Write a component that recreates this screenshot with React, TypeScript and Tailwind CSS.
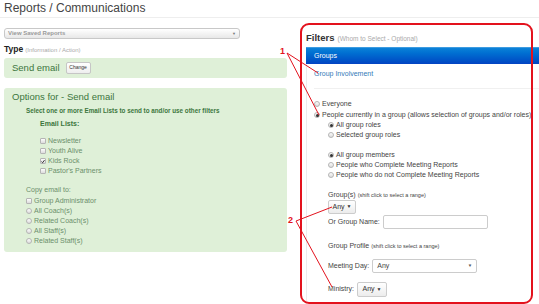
import React from "react";

function Radio({ checked = false }: { checked?: boolean }) {
  return (
    <span className="inline-flex w-[6px] h-[6px] rounded-full border border-[#b5b5b5] bg-gradient-to-b from-[#fdfdfd] to-[#dcdcdc] items-center justify-center mr-[2px] shrink-0">
      {checked && <span className="w-[3px] h-[3px] rounded-full bg-[#333]" />}
    </span>
  );
}

function Check({ checked = false }: { checked?: boolean }) {
  return (
    <span className="inline-flex w-[6px] h-[6px] rounded-[1px] border border-[#b5b5b5] bg-gradient-to-b from-[#fdfdfd] to-[#dcdcdc] items-center justify-center mr-[2px] shrink-0">
      {checked && (
        <svg width="5" height="5" viewBox="0 0 5 5">
          <path d="M0.6 2.6 L2 4 L4.4 0.8" stroke="#222" strokeWidth="1.1" fill="none" />
        </svg>
      )}
    </span>
  );
}

function Row({ children, className = "" }: { children: React.ReactNode; className?: string }) {
  return <div className={"flex items-center h-[10px] leading-[10px] " + className}>{children}</div>;
}

function SmallBtn({ label, w }: { label: string; w: string }) {
  return (
    <span className={"inline-flex items-center justify-center h-full rounded-[2px] border border-[#ccc] bg-gradient-to-b from-white to-[#ececec] text-[7px] text-[#333] " + w}>
      {label}
      <span className="ml-[2px] text-[5px]">▼</span>
    </span>
  );
}

export default function App() {
  const lists = [
    { name: "Newsletter", on: false },
    { name: "Youth Alive", on: false },
    { name: "Kids Rock", on: true },
    { name: "Pastor's Partners", on: false },
  ];
  const copyTo = ["All Coach(s)", "Related Coach(s)", "All Staff(s)", "Related Staff(s)"];

  return (
    <div className="relative w-[539px] h-[304px] overflow-hidden bg-white font-['Liberation_Sans',Arial,sans-serif] text-[#333]">
      <div className="h-[18px] border-b border-[#eee] px-[4px] text-[12px] leading-[17px] text-[#444]">
        Reports / Communications
      </div>

      <div className="flex">
        {/* left column */}
        <div className="w-[283px] ml-[4px]">
          <div className="mt-[10px] w-[236px] h-[11px] rounded-[3px] border border-[#c8c8c8] bg-gradient-to-b from-white to-[#e8e8e8] flex items-center justify-between px-[3px]">
            <span className="text-[6px] font-bold text-[#9a9a9a]">View Saved Reports</span>
            <span className="text-[4px] text-[#777]">▼</span>
          </div>

          <div className="mt-[5px] h-[10px] leading-[10px] flex items-baseline">
            <span className="text-[8.5px] font-bold text-[#222]">Type</span>
            <span className="ml-[2px] text-[6px] text-[#aaa]">(Information / Action)</span>
          </div>

          <div className="mt-[4px] h-[20px] rounded-[3px] bg-[#dff0d8] flex items-center pl-[8px]">
            <span className="text-[9.5px] text-[#3c763d] font-medium">Send email</span>
            <span className="ml-[6px] h-[12px] w-[25px] rounded-[2px] border border-[#c6c6c6] bg-gradient-to-b from-white to-[#eee] text-[5px] text-[#333] flex items-center justify-center">
              Change
            </span>
          </div>

          <div className="mt-[10px] rounded-[3px] bg-[#dff0d8] pt-[2px] pb-[6px] text-[#3c763d]">
            <div className="h-[14px] leading-[14px] pl-[8px] text-[9.5px] font-medium">Options for - Send email</div>
            <div className="mt-[2px] h-[10px] leading-[10px] pl-[22px] text-[6.3px] font-bold">
              Select one or more Email Lists to send to and/or use other filters
            </div>
            <div className="mt-[3px] h-[10px] leading-[10px] pl-[36px] text-[7px] font-bold">Email Lists:</div>
            <div className="mt-[7px] pl-[36px] text-[7px] text-[#6b8f6b]">
              {lists.map((l) => (
                <Row key={l.name}>
                  <Check checked={l.on} />
                  {l.name}
                </Row>
              ))}
            </div>
            <div className="mt-[9px] pl-[22px] text-[7px] text-[#6b8f6b]">
              <Row>Copy email to:</Row>
              <Row className="mt-[1px]">
                <Check />
                Group Administrator
              </Row>
              {copyTo.map((c) => (
                <Row key={c}>
                  <Radio />
                  {c}
                </Row>
              ))}
            </div>
          </div>
        </div>

        {/* right column */}
        <div className="ml-[19px] flex-1">
          <div className="mt-[14px] h-[12px] leading-[12px] flex items-baseline">
            <span className="text-[9.5px] font-bold text-[#333]">Filters</span>
            <span className="ml-[3px] text-[6.5px] text-[#aaa]">(Whom to Select - Optional)</span>
          </div>
          <div className="mt-[3px] h-[17px] bg-gradient-to-b from-[#0c82d8] to-[#0443c2] text-white text-[7px] flex items-center pl-[8px] border-t border-[#3d9be0]">
            Groups
          </div>
          <div className="h-[240px] border-l border-[#ececec] pl-[7px] pt-[5px] text-[7px] text-[#444]">
            <Row className="text-[#337ab7]">Group Involvement</Row>
            <div className="mt-[9px] border-t border-[#f0f0f0]" />
            <Row className="mt-[10px]">
              <Radio />
              Everyone
            </Row>
            <Row className="mt-[1px]">
              <Radio checked />
              People currently in a group (allows selection of groups and/or roles)
            </Row>
            <div className="pl-[14px]">
              <Row>
                <Radio checked />
                All group roles
              </Row>
              <Row>
                <Radio />
                Selected group roles
              </Row>
              <Row className="mt-[10px]">
                <Radio checked />
                All group members
              </Row>
              <Row>
                <Radio />
                People who Complete Meeting Reports
              </Row>
              <Row>
                <Radio />
                People who do not Complete Meeting Reports
              </Row>
              <Row className="mt-[10px]">
                Group(s)<span className="ml-[2px] text-[5.5px]">(shift click to select a range)</span>
              </Row>
              <div className="h-[14px] flex">
                <SmallBtn label="Any" w="w-[28px]" />
              </div>
              <div className="mt-[1px] h-[14px] flex items-center">
                <span>Or Group Name:</span>
                <span className="ml-[3px] h-full w-[105px] rounded-[2px] border border-[#ccc] bg-white" />
              </div>
              <Row className="mt-[12px]">
                Group Profile<span className="ml-[2px] text-[5.5px]">(shift click to select a range)</span>
              </Row>
              <div className="mt-[8px] h-[14px] flex items-center">
                <span>Meeting Day:</span>
                <span className="ml-[3px] h-full w-[105px] rounded-[2px] border border-[#ccc] bg-white flex items-center justify-between px-[4px]">
                  <span>Any</span>
                  <span className="text-[4.5px] text-[#555]">▼</span>
                </span>
              </div>
              <div className="mt-[9px] h-[15px] flex items-center">
                <span>Ministry:</span>
                <span className="ml-[3px] h-full flex">
                  <SmallBtn label="Any" w="w-[30px]" />
                </span>
              </div>
            </div>
          </div>
        </div>
      </div>

      {/* annotation overlay */}
      <div className="absolute left-[300px] top-[23px] w-[233px] h-[281px] rounded-[9px] border-2 border-[#e3121d] pointer-events-none" />
      <svg className="absolute left-0 top-0 pointer-events-none" width="539" height="304">
        <g stroke="#e3121d" strokeWidth="1" fill="none">
          <line x1="287" y1="53" x2="318" y2="73" />
          <line x1="287" y1="53" x2="319" y2="115" />
          <line x1="296" y1="221" x2="332" y2="207" />
          <line x1="296" y1="221" x2="332" y2="287" />
        </g>
      </svg>
      <span className="absolute left-[280px] top-[46px] text-[9px] font-bold text-[#e3121d] leading-[10px]">1</span>
      <span className="absolute left-[288px] top-[215px] text-[9px] font-bold text-[#e3121d] leading-[10px]">2</span>
    </div>
  );
}
